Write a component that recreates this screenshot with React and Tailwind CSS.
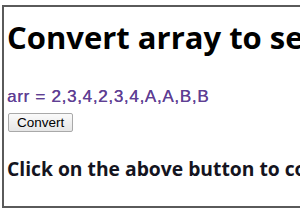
export default function App() {
  return (
    <div className="h-[210px] w-[300px] overflow-hidden bg-white">
      <div className="ml-[2px] mt-[5px] flex h-[203px] w-[520px] flex-col items-start border-2 border-[#5a5a5a] pl-[3px]">
        <h1 className="mt-[10px] whitespace-nowrap font-['Open_Sans',sans-serif] text-[31px] font-bold leading-[40px] text-black">
          Convert array to set in JavaScript
        </h1>
        <p className="mt-[30px] whitespace-nowrap font-['Liberation_Sans',Arial,sans-serif] text-[17px] leading-[20px] tracking-[0.7px] text-[#5f3f94] [text-shadow:0.3px_0_0_#5f3f94]">
          arr = 2,3,4,2,3,4,A,A,B,B
        </p>
        <button className="ml-px mt-[6px] h-[19px] rounded-[2px] border border-[#a9a9a9] bg-gradient-to-b from-[#fafafa] to-[#e6e6e6] px-[8px] font-['Liberation_Sans',Arial,sans-serif] text-[13.5px] leading-[16px] text-black">
          Convert
        </button>
        <p className="mt-[25px] whitespace-nowrap font-['Open_Sans',sans-serif] text-[19.3px] font-bold leading-[24px] text-[#141420]">
          Click on the above button to convert array to set
        </p>
      </div>
    </div>
  );
}
